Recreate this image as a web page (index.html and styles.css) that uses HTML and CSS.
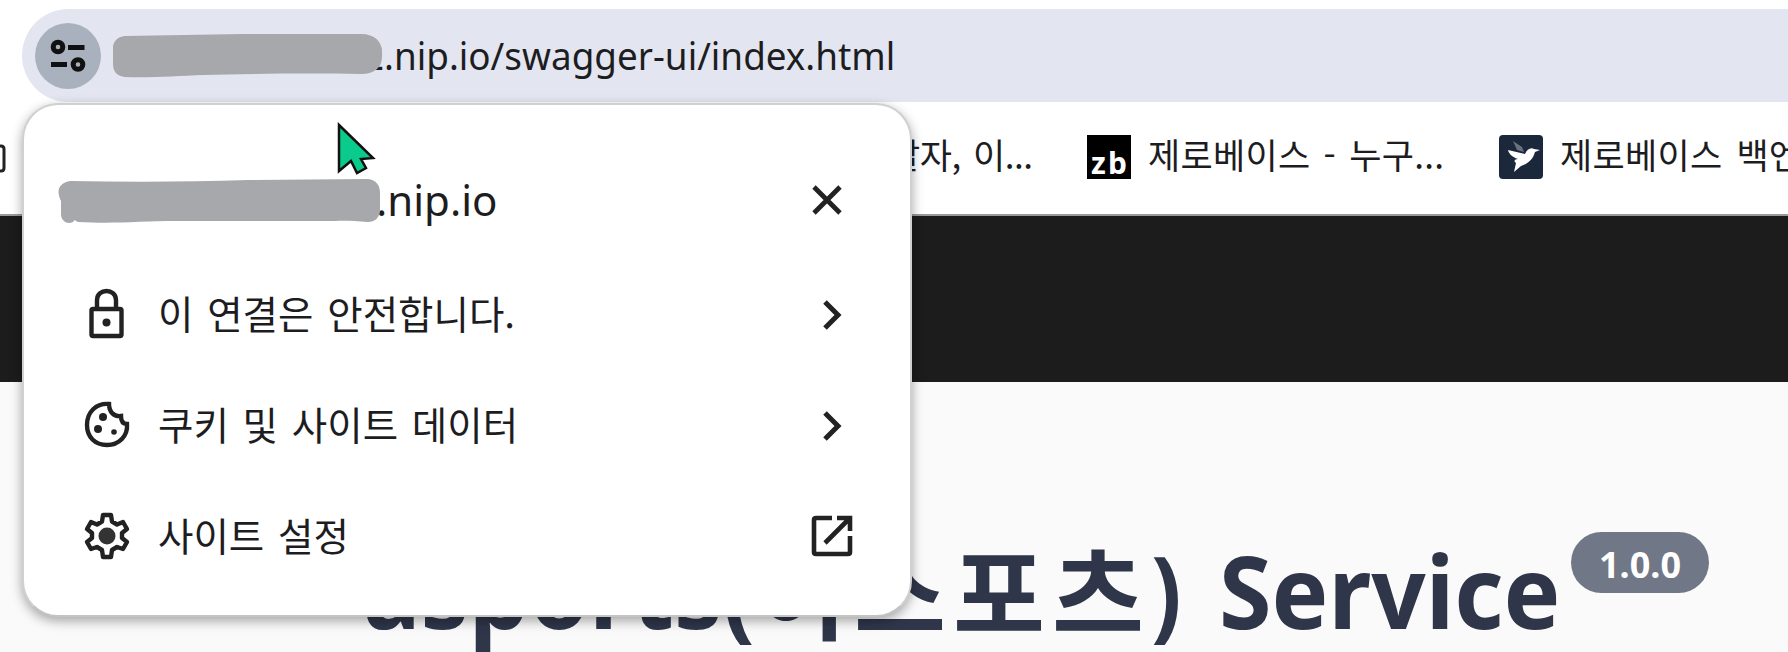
FILE: index.html
```html
<!DOCTYPE html>
<html lang="ko">
<head>
<meta charset="utf-8">
<title>Swagger UI</title>
<link rel="stylesheet" href="styles.css">
</head>
<body>
<div class="toolbar">
  <div class="omnibox">
    <span class="site-chip"><svg width="66" height="66" viewBox="0 0 66 66" fill="none" stroke="#111" stroke-width="5"><circle cx="23" cy="24" r="4.800"/><path d="M33 24.500H49.500M16 41.500H32"/><circle cx="43" cy="41.500" r="4.800"/></svg></span>
    <span class="url"><span>2.nip.io/swagger-ui/index.html</span></span>
    <svg class="mask" width="270" height="44" viewBox="0 0 270 44"><path d="M12 2C50 1 90 1 130 0H248C262 0 269 8 269 18V23C269 33 262 40 248 40C190 39 130 40 90 41C65 42 35 44 12 43C4 42 0 38 0 30V18C-1 14 0 3 12 2Z" fill="#a7a8ab"/></svg>
  </div>
</div>
<div class="bookmarks">
  <svg class="edge" width="6" height="30" viewBox="0 0 6 30" fill="none" stroke="#222" stroke-width="3"><path d="M0 2H1Q4 2 4 5V24Q4 27 1 27H0"/></svg>
  <span class="bm first">발자, 이...</span>
  <svg class="fav" width="44" height="44" viewBox="0 0 44 44"><rect width="44" height="44" fill="#000"/><text x="4" y="39" textLength="36" lengthAdjust="spacing" class="zb">zb</text></svg>
  <span class="bm second">제로베이스 - 누구...</span>
  <svg class="fav" width="44" height="44" viewBox="0 0 44 44"><rect width="44" height="44" rx="4" fill="#1b273a"/><path d="M14 6L23 12L25 17L18 15Z" fill="#68717d"/><path d="M9 15L26 19C28 14 32 12 35 14L41 15L36 17C34 25 28 29 22 31L15 37L17 28C14 26 16 24 19 24C13 22 10 19 9 15Z" fill="#fff"/></svg>
  <span class="bm third">제로베이스 백엔드</span>
</div>
<div class="topbar"></div>
<main class="content">
  <h1 class="title"><span class="t-latin">asports(</span><span class="t-ko">이스포츠</span><span class="t-close">)</span><span class="t-service">Service</span></h1>
  <span class="version"><span>1.0.0</span></span>
</main>

<section class="popup">
  <header class="head">
    <svg class="mask2" width="323" height="44" viewBox="0 0 323 44"><path d="M12 2C70 3 130 3 190 1L310 0C318 1 322 6 322 14V32C321 39 317 43 310 43C290 41 280 42 270 42H120C80 42 60 45 20 43C15 41 18 40 15 43C8 46 3 41 3 35V22C0 16 -3 5 12 2Z" fill="#a7a8ab"/></svg>
    <span class="host">.nip.io</span>
    <svg class="close" width="30" height="30" viewBox="0 0 30 30" fill="none" stroke="#222" stroke-width="4.800"><path d="M2 2L28 28M28 2L2 28"/></svg>
  </header>
  <div class="item">
    <span class="ico"><svg width="48" height="52" viewBox="0 0 48 52" fill="none" stroke="#222" stroke-width="4.400"><rect x="8.500" y="21" width="30" height="27" rx="1.500"/><path d="M14 20V12C14 0 33 0 33 12V20"/><circle cx="23.500" cy="34.500" r="4" fill="#222" stroke="none"/></svg></span>
    <span class="label l1">이 연결은 안전합니다.</span>
    <svg class="chev" width="24" height="32" viewBox="0 0 24 32" fill="none" stroke="#222" stroke-width="5"><path d="M3 3L16 16L3 29"/></svg>
  </div>
  <div class="item">
    <span class="ico"><svg width="48" height="52" viewBox="0 0 48 52" fill="none" stroke="#222" stroke-width="4.400"><path d="M26 5C13 4 4 13 4 26C4 38 12 46 24 46C36 46 45 37 44 25C40 25 38 22 38 17C31 18 26 13 26 5Z"/><g fill="#222" stroke="none"><circle cx="20" cy="18" r="4"/><circle cx="15" cy="30" r="4"/><circle cx="31" cy="33" r="2.800"/></g></svg></span>
    <span class="label l2">쿠키 및 사이트 데이터</span>
    <svg class="chev" width="24" height="32" viewBox="0 0 24 32" fill="none" stroke="#222" stroke-width="5"><path d="M3 3L16 16L3 29"/></svg>
  </div>
  <div class="item">
    <span class="ico"><svg width="48" height="52" viewBox="0 0 48 52" fill="none" stroke="#222" stroke-width="4.400" stroke-linejoin="round"><path d="M20 5H28L29 11.500L34 14.500L40 12L44 19L39 23V28L44 32L40 39L34 37L29 40L28 47H20L19 40L14 37L8 39L4 32L9 28V23L4 19L8 12L14 14.500L19 11.500Z"/><circle cx="24" cy="26" r="8.500" fill="#333" stroke="none"/></svg></span>
    <span class="label l3">사이트 설정</span>
    <svg class="ext" width="42" height="42" viewBox="0 0 42 42" fill="none" stroke="#222" stroke-width="4.600"><path d="M21 3H5Q3 3 3 5V37Q3 39 5 39H37Q39 39 39 37V21M14 28L37 5M26 3H39V16"/></svg>
  </div>
</section>
<svg class="cursor" width="42" height="56" viewBox="0 0 42 56"><path d="M2 3L36 36L24 37L29 46L20 51L14 39L2 49Z" fill="#0acb8b" stroke="#111" stroke-width="2.500"/></svg>
</body>
</html>
```

FILE: styles.css
```css
* { box-sizing: border-box; }
body { margin: 0; width: 1788px; height: 652px; overflow: hidden; position: relative; background: #fafafa; color: #1d1d1f; font-family: "Noto Sans", "Noto Sans CJK KR", sans-serif; }
svg { display: block; flex: none; }
.toolbar { height: 103px; padding: 9px 0 1px 22px; background: #fff; }
.omnibox { position: relative; height: 93px; display: flex; align-items: center; background: #e3e6f0; border-radius: 47px 0 0 47px; padding-left: 13px; }
.site-chip { width: 66px; height: 66px; border-radius: 50%; background: #aab1be; }
.url { padding: 0 0 2px 262px; font-size: 38px; line-height: 50px; white-space: nowrap; }
.url span { display: inline-block; transform: scaleX(.97); transform-origin: 0 50%; }
.mask { position: absolute; left: 91px; top: 25px; }
.bookmarks { height: 113px; background: #fff; border-bottom: 2px solid #999; display: flex; align-items: center; padding-bottom: 4px; white-space: nowrap; overflow: hidden; }
.edge { margin-top: 4px; }
.bm { flex: none; font-family: "Noto Sans CJK KR", sans-serif; font-size: 35px; line-height: 44px; letter-spacing: .3px; padding-bottom: 5px; word-spacing: 3px; }
.first { width: 199px; margin-left: 882px; letter-spacing: -.5px; }
.second { width: 298px; margin: 0 53px 0 17px; }
.third { margin-left: 17px; word-spacing: 4px; }
.fav { margin-top: 1px; }
.zb { font: bold 30px "Noto Sans", sans-serif; fill: #fff; }
.topbar { height: 166px; background: #1c1c1c; }
.content { display: flex; align-items: flex-start; padding: 150px 0 0 363px; height: 270px; color: #2f364a; white-space: nowrap; }
.title { display: flex; align-items: baseline; margin: -8px 0 0; font-size: 100px; line-height: 132px; font-weight: 700; width: 1208px; }
.t-latin { width: 392px; transform: scaleX(.96); transform-origin: 0 50%; }
.t-ko { font-family: "Noto Sans CJK KR", sans-serif; font-size: 100px; letter-spacing: 7px; line-height: 100px; padding-bottom: 4px; transform: translateY(3px); }
.t-close { width: 33px; transform: scaleX(.9); transform-origin: 0 50%; }
.t-service { margin-left: 35px; transform: scaleX(.954); transform-origin: 0 50%; }
.version { height: 61px; width: 138px; flex: none; border-radius: 31px; background: #707786; color: #fff; font-weight: 700; font-size: 36px; line-height: 65px; text-align: center; }
.popup { position: absolute; left: 22px; top: 103px; width: 890px; height: 514px; background: #fff; border: 2px solid #d0d0d0; border-bottom-color: #c4c4c4; border-radius: 36px; box-shadow: 0 4px 12px rgba(0,0,0,.35); padding: 40px 57px 0 34px; }
.head { display: flex; align-items: center; height: 112px; padding-bottom: 2px; }
.mask2 { margin-top: 2px; position: relative; }
.host { font-size: 42px; line-height: 60px; width: 431px; text-indent: -5px; }
.item { height: 111px; display: flex; align-items: center; padding: 3px 0 0 25px; }
.ico { width: 75px; }
.label { flex: 1; font-family: "Noto Sans CJK KR", sans-serif; font-size: 38.500px; line-height: 50px; word-spacing: 3px; padding-bottom: 4px; }
.chev { margin: 2px 7px 0 0; }
.ext { margin-right: 0; }
.cursor { position: absolute; left: 337px; top: 122px; }
```
